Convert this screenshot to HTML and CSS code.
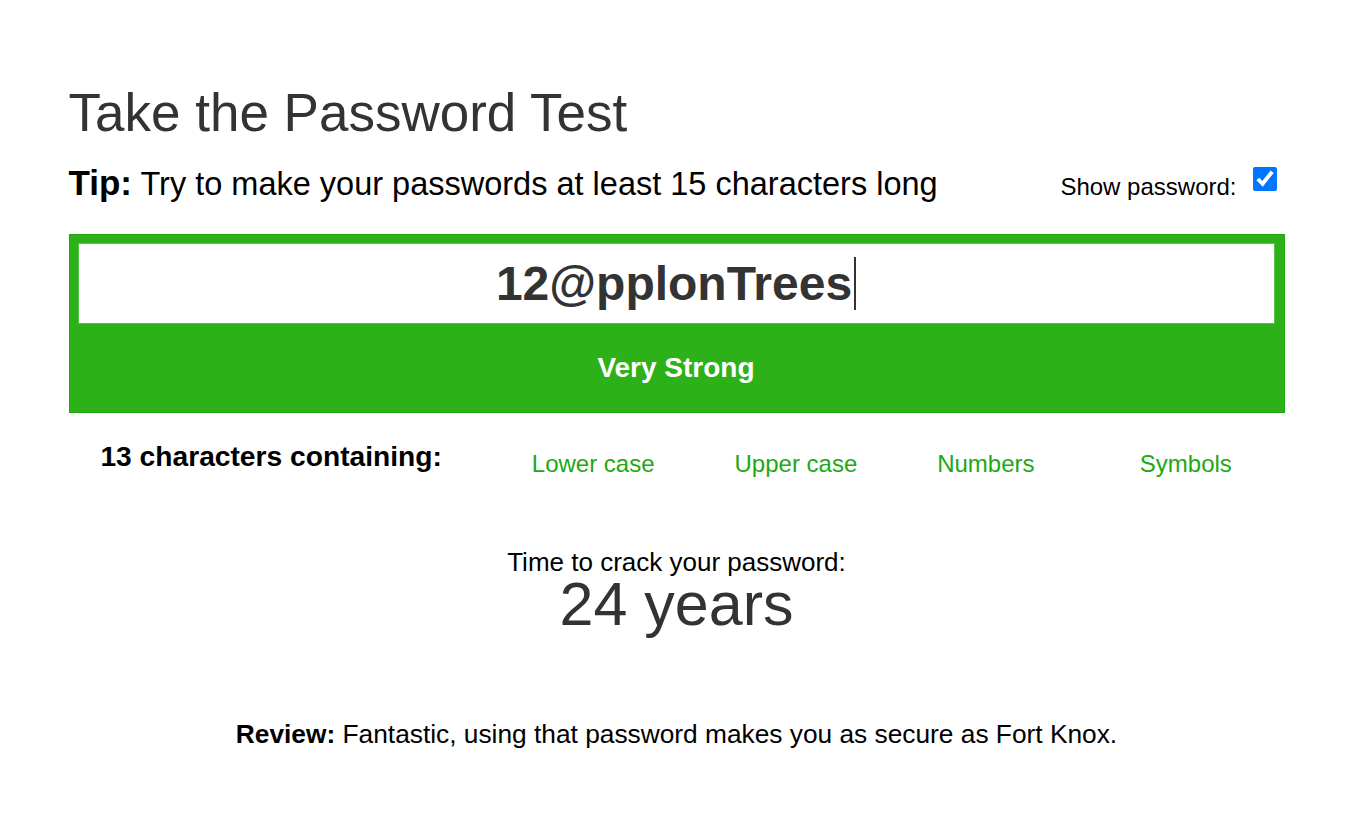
FILE: index.html
```html
<!DOCTYPE html>
<html lang="en">
<head>
<meta charset="utf-8">
<title>Take the Password Test</title>
<link rel="stylesheet" href="styles.css">
</head>
<body>
<main class="container">
  <h1 class="title">Take the Password Test</h1>
  <div class="tip-row">
    <p class="tip"><strong class="tip-label">Tip:</strong> Try to make your passwords at least 15 characters long</p>
    <label class="show">
      <span class="show-text">Show password:</span>
      <input class="show-check" type="checkbox" checked>
    </label>
  </div>
  <section class="meter">
    <div class="field" role="textbox" aria-label="Password"><span class="field-text">12@pplonTrees</span><span class="caret"></span></div>
    <div class="strength">Very Strong</div>
  </section>
  <div class="reqs">
    <div class="reqs-label">13 characters containing:</div>
    <div class="req">Lower case</div>
    <div class="req">Upper case</div>
    <div class="req">Numbers</div>
    <div class="req">Symbols</div>
  </div>
  <div class="crack">
    <div class="crack-label">Time to crack your password:</div>
    <div class="crack-time">24 years</div>
  </div>
  <p class="review"><strong>Review:</strong> Fantastic, using that password makes you as secure as Fort Knox.</p>
</main>
</body>
</html>
```

FILE: styles.css
```css
* { box-sizing: border-box; }

html, body {
  margin: 0;
  padding: 0;
  background: #ffffff;
}

body {
  font-family: "Liberation Sans", Arial, sans-serif;
  color: #000;
}

.container {
  width: 1216px;
  margin: 0 auto;
  padding-top: 83px;
}

.title {
  margin: 0;
  font-size: 53px;
  line-height: 60px;
  font-weight: 400;
  color: #333;
}

.tip-row {
  display: flex;
  justify-content: space-between;
  align-items: baseline;
  margin-top: 20px;
  padding-right: 8px;
}

.tip {
  margin: 0;
  font-size: 32.5px;
  line-height: 40px;
  color: #000;
}

.tip-label {
  font-size: 35px;
  font-weight: 700;
}

.show {
  display: flex;
  align-items: flex-start;
  gap: 16px;
}

.show-text {
  font-size: 24px;
  line-height: 26px;
}

.show-check {
  width: 24px;
  height: 24px;
  margin: -7px 0 0 0;
  accent-color: #0075ff;
}

.meter {
  margin-top: 30px;
  background: #2cb118;
  border: 1px solid #1fa414;
  padding: 8px 9px 0 8px;
}

.field {
  height: 81px;
  background: #fff;
  border: 1px solid #56c447;
  text-align: center;
  font-size: 48px;
  font-weight: 700;
  line-height: 80px;
  color: #333;
}

.caret {
  display: inline-block;
  width: 2px;
  height: 53px;
  margin-left: 2px;
  background: #333;
  vertical-align: -10px;
}

.strength {
  height: 88px;
  text-align: center;
  color: #fff;
  font-size: 28px;
  font-weight: 700;
  line-height: 88px;
}

.reqs {
  display: grid;
  grid-template-columns: 2fr 1fr 1fr 1fr 1fr;
  align-items: start;
  margin-top: 26px;
}

.reqs-label {
  text-align: center;
  font-size: 28.2px;
  line-height: 34px;
  font-weight: 700;
}

.req {
  padding-top: 8px;
  padding-left: 58px;
  font-size: 24px;
  line-height: 34px;
  color: #1ea814;
}

.crack {
  margin-top: 68px;
  text-align: center;
}

.crack-label {
  font-size: 26px;
  line-height: 26px;
}

.crack-time {
  font-size: 61px;
  line-height: 58px;
  color: #333;
}

.review {
  margin: 86px 0 0;
  text-align: center;
  font-size: 26.3px;
  line-height: 30px;
}
```
